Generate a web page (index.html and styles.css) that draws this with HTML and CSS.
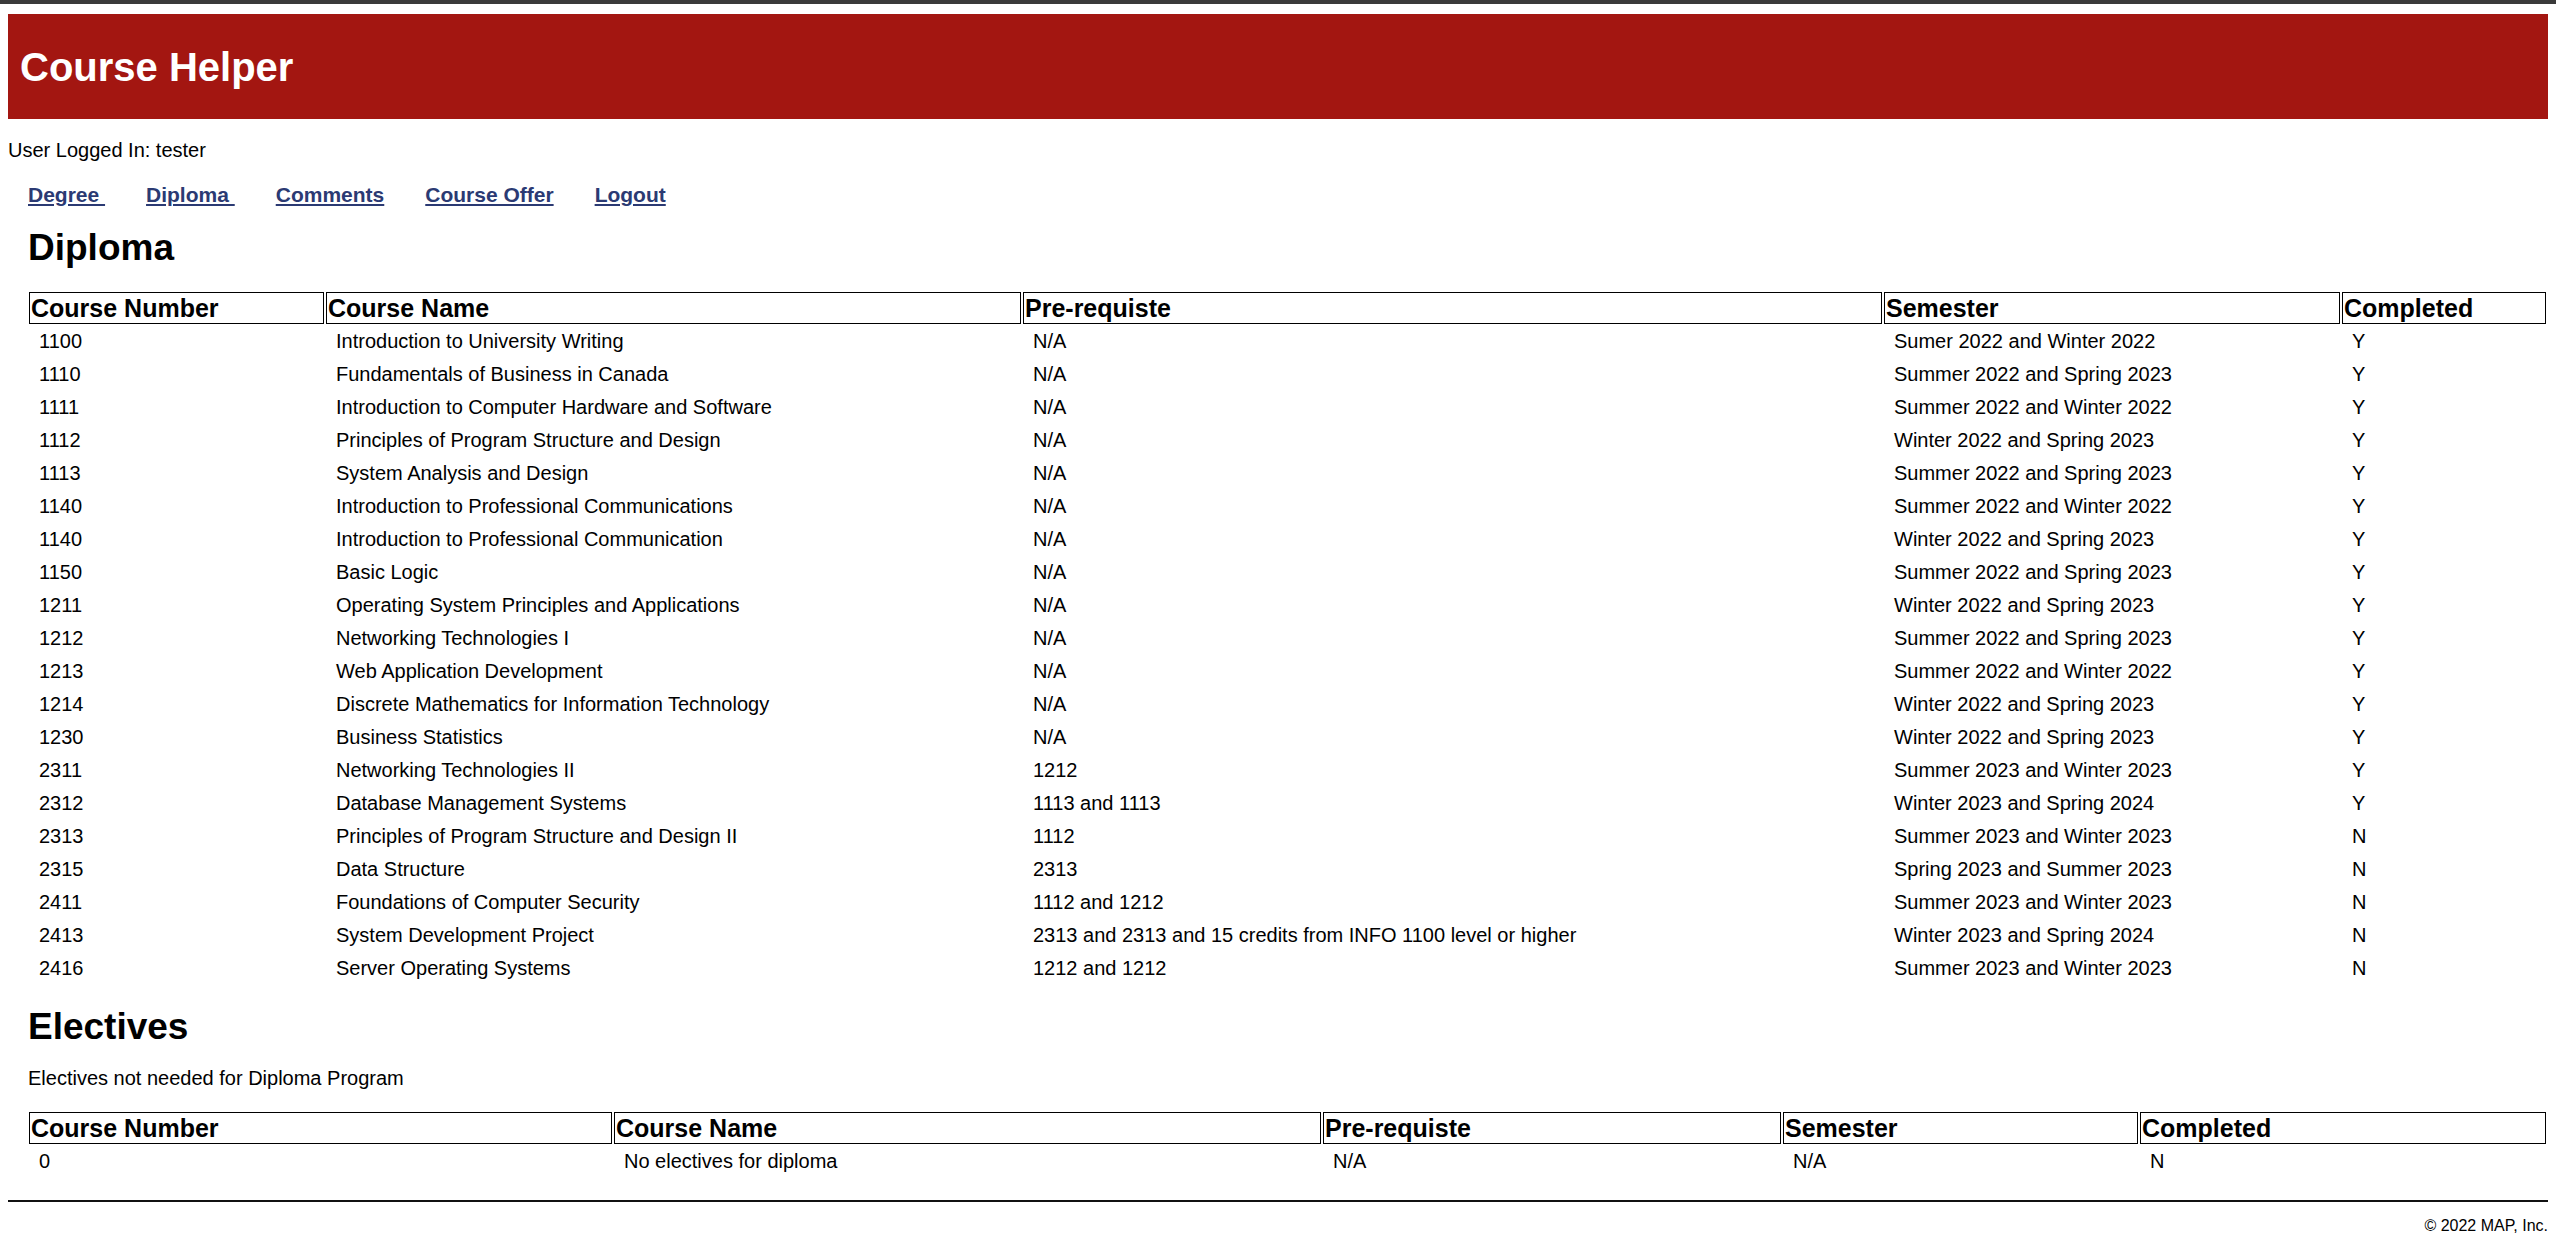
FILE: index.html
```html
<!DOCTYPE html>
<html lang="en">
<head>
<meta charset="utf-8">
<title>Course Helper - Diploma</title>
<link rel="stylesheet" href="styles.css">
</head>
<body>
<div class="topbar"></div>
<div class="page">
  <header class="site-header">
    <h1 class="site-title">Course Helper</h1>
  </header>
  <p class="user">User Logged In: tester</p>
  <main class="content">
    <nav class="nav">
      <a href="#">Degree&nbsp;</a>
      <a href="#">Diploma&nbsp;</a>
      <a href="#">Comments</a>
      <a href="#">Course Offer</a>
      <a href="#">Logout</a>
    </nav>

    <h2 class="section-title">Diploma</h2>
    <table class="courses diploma">
      <thead>
        <tr>
          <th class="c1">Course Number</th>
          <th class="c2">Course Name</th>
          <th class="c3">Pre-requiste</th>
          <th class="c4">Semester</th>
          <th class="c5">Completed</th>
        </tr>
      </thead>
      <tbody>
        <tr><td>1100</td><td>Introduction to University Writing</td><td>N/A</td><td>Sumer 2022 and Winter 2022</td><td>Y</td></tr>
        <tr><td>1110</td><td>Fundamentals of Business in Canada</td><td>N/A</td><td>Summer 2022 and Spring 2023</td><td>Y</td></tr>
        <tr><td>1111</td><td>Introduction to Computer Hardware and Software</td><td>N/A</td><td>Summer 2022 and Winter 2022</td><td>Y</td></tr>
        <tr><td>1112</td><td>Principles of Program Structure and Design</td><td>N/A</td><td>Winter 2022 and Spring 2023</td><td>Y</td></tr>
        <tr><td>1113</td><td>System Analysis and Design</td><td>N/A</td><td>Summer 2022 and Spring 2023</td><td>Y</td></tr>
        <tr><td>1140</td><td>Introduction to Professional Communications</td><td>N/A</td><td>Summer 2022 and Winter 2022</td><td>Y</td></tr>
        <tr><td>1140</td><td>Introduction to Professional Communication</td><td>N/A</td><td>Winter 2022 and Spring 2023</td><td>Y</td></tr>
        <tr><td>1150</td><td>Basic Logic</td><td>N/A</td><td>Summer 2022 and Spring 2023</td><td>Y</td></tr>
        <tr><td>1211</td><td>Operating System Principles and Applications</td><td>N/A</td><td>Winter 2022 and Spring 2023</td><td>Y</td></tr>
        <tr><td>1212</td><td>Networking Technologies I</td><td>N/A</td><td>Summer 2022 and Spring 2023</td><td>Y</td></tr>
        <tr><td>1213</td><td>Web Application Development</td><td>N/A</td><td>Summer 2022 and Winter 2022</td><td>Y</td></tr>
        <tr><td>1214</td><td>Discrete Mathematics for Information Technology</td><td>N/A</td><td>Winter 2022 and Spring 2023</td><td>Y</td></tr>
        <tr><td>1230</td><td>Business Statistics</td><td>N/A</td><td>Winter 2022 and Spring 2023</td><td>Y</td></tr>
        <tr><td>2311</td><td>Networking Technologies II</td><td>1212</td><td>Summer 2023 and Winter 2023</td><td>Y</td></tr>
        <tr><td>2312</td><td>Database Management Systems</td><td>1113 and 1113</td><td>Winter 2023 and Spring 2024</td><td>Y</td></tr>
        <tr><td>2313</td><td>Principles of Program Structure and Design II</td><td>1112</td><td>Summer 2023 and Winter 2023</td><td>N</td></tr>
        <tr><td>2315</td><td>Data Structure</td><td>2313</td><td>Spring 2023 and Summer 2023</td><td>N</td></tr>
        <tr><td>2411</td><td>Foundations of Computer Security</td><td>1112 and 1212</td><td>Summer 2023 and Winter 2023</td><td>N</td></tr>
        <tr><td>2413</td><td>System Development Project</td><td>2313 and 2313 and 15 credits from INFO 1100 level or higher</td><td>Winter 2023 and Spring 2024</td><td>N</td></tr>
        <tr><td>2416</td><td>Server Operating Systems</td><td>1212 and 1212</td><td>Summer 2023 and Winter 2023</td><td>N</td></tr>
      </tbody>
    </table>

    <h2 class="section-title electives-title">Electives</h2>
    <p class="note">Electives not needed for Diploma Program</p>
    <table class="courses electives">
      <thead>
        <tr>
          <th class="e1">Course Number</th>
          <th class="e2">Course Name</th>
          <th class="e3">Pre-requiste</th>
          <th class="e4">Semester</th>
          <th class="e5">Completed</th>
        </tr>
      </thead>
      <tbody>
        <tr><td>0</td><td>No electives for diploma</td><td>N/A</td><td>N/A</td><td>N</td></tr>
      </tbody>
    </table>
  </main>
  <footer class="site-footer">
    <hr class="rule">
    <p class="copyright">&copy; 2022 MAP, Inc.</p>
  </footer>
</div>
</body>
</html>
```

FILE: styles.css
```css
* {
  box-sizing: border-box;
}

html, body {
  margin: 0;
  padding: 0;
  background: #ffffff;
}

body {
  font-family: "Liberation Sans", Arial, sans-serif;
  font-size: 20px;
  line-height: 23px;
  color: #000000;
}

.topbar {
  height: 4px;
  background: #3a3a3a;
}

.page {
  padding: 0 8px;
}

.site-header {
  margin-top: 10px;
  height: 105px;
  background: #a31611;
  display: flex;
  align-items: center;
  padding-left: 12px;
}

.site-title {
  margin: 0;
  color: #ffffff;
  font-size: 40px;
  line-height: 46px;
  font-weight: bold;
}

.user {
  margin: 20px 0 0 0;
}

.content {
  margin-left: 19px;
}

.nav {
  display: flex;
  gap: 41px;
  margin-top: 21px;
  padding-left: 1px;
  font-size: 21px;
  line-height: 23px;
}

.nav a {
  color: #2b3a73;
  font-weight: bold;
  text-decoration: underline;
  white-space: pre;
}

.section-title {
  margin: 21px 0 0 1px;
  font-size: 37px;
  line-height: 42px;
  font-weight: bold;
}

.electives-title {
  margin-top: 20px;
}

.courses {
  width: 100%;
  table-layout: fixed;
  border-collapse: separate;
  border-spacing: 2px;
  margin-top: 21px;
}

.courses th {
  border: 1px solid #000000;
  padding: 1px;
  font-size: 25px;
  line-height: 28px;
  font-weight: bold;
  text-align: left;
}

.courses td {
  padding: 4px 10px;
  line-height: 23px;
  text-align: left;
  vertical-align: middle;
}

.c1 { width: 295px; }
.c2 { width: 695px; }
.c3 { width: 859px; }
.c4 { width: 456px; }
.c5 { width: 204px; }

.e1 { width: 583px; }
.e2 { width: 707px; }
.e3 { width: 458px; }
.e4 { width: 355px; }
.e5 { width: 406px; }

.note {
  margin: 19px 0 0 1px;
}

.electives {
  margin-top: 20px;
}

.site-footer {
  margin-top: 21px;
}

.rule {
  margin: 0;
  border: 0;
  height: 2px;
  background: #111111;
}

.copyright {
  margin: 15px 0 0 0;
  text-align: right;
  font-size: 16px;
  line-height: 18px;
}
```
